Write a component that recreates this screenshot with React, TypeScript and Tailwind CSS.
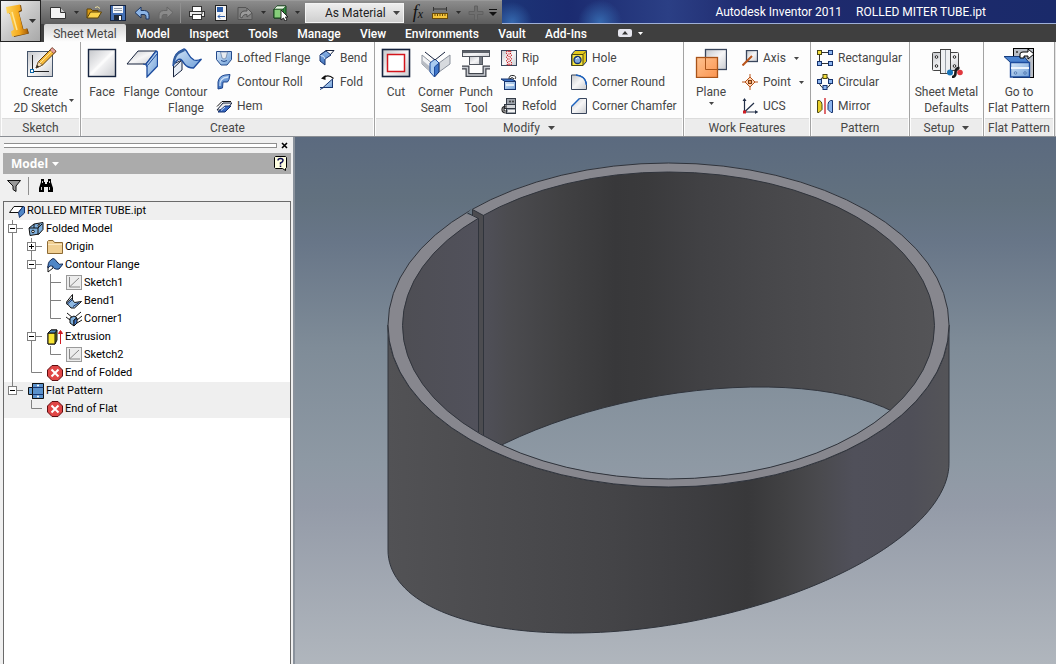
import { useState } from "react";
import type { ReactNode } from "react";
import clsx from "clsx";

type IconProps = { children: ReactNode; size?: number; className?: string };

const Icon = ({ children, size = 16, className }: IconProps) => (
  <svg
    width={size}
    height={size}
    viewBox={`0 0 ${size} ${size}`}
    className={clsx("shrink-0", className)}
    aria-hidden="true"
  >
    {children}
  </svg>
);

const Caret = ({ className }: { className?: string }) => (
  <svg width="7" height="4" viewBox="0 0 7 4" className={clsx("shrink-0", className)} aria-hidden="true">
    <path d="M0 0h7L3.5 4z" fill="currentColor" />
  </svg>
);

const SmallCaret = ({ className }: { className?: string }) => (
  <svg width="5" height="3" viewBox="0 0 5 3" className={clsx("shrink-0", className)} aria-hidden="true">
    <path d="M0 0h5L2.5 3z" fill="currentColor" />
  </svg>
);

/* shared gradients for the ribbon icons */
const Defs = () => (
  <svg width="0" height="0" className="absolute" aria-hidden="true">
    <defs>
      <linearGradient id="steel" x1="0" y1="0" x2="1" y2="1">
        <stop offset="0" stopColor="#c4c6ca" />
        <stop offset=".5" stopColor="#f6f6f7" />
        <stop offset="1" stopColor="#c9cbcf" />
      </linearGradient>
      <linearGradient id="blue" x1="0" y1="0" x2="1" y2="1">
        <stop offset="0" stopColor="#d6e7f8" />
        <stop offset="1" stopColor="#6f9fd8" />
      </linearGradient>
      <linearGradient id="blueDeep" x1="0" y1="0" x2="0" y2="1">
        <stop offset="0" stopColor="#8db6e6" />
        <stop offset="1" stopColor="#3e70bd" />
      </linearGradient>
      <linearGradient id="gold" x1="0" y1="0" x2="1" y2="0">
        <stop offset="0" stopColor="#ffd75c" />
        <stop offset=".6" stopColor="#f5a91c" />
        <stop offset="1" stopColor="#a85f08" />
      </linearGradient>
      <linearGradient id="orange" x1="0" y1="0" x2="1" y2="1">
        <stop offset="0" stopColor="#ffc28f" />
        <stop offset="1" stopColor="#fb9450" />
      </linearGradient>
    </defs>
  </svg>
);

/* ---------- large icons ---------- */

const Sketch2DIcon = () => (
  <Icon size={32}>
    <rect x="2.500" y="5.500" width="25" height="25" fill="url(#steel)" stroke="#44546a" />
    <path d="M7.500 9v17M7 25.500h17" stroke="#222" fill="none" />
    <rect x="5.500" y="23.500" width="3" height="3" fill="#fff" stroke="#0b66a8" />
    <path d="M11 22l2.500-6.500L27 2l4 3.500L17.500 19z" fill="#f5b93b" stroke="#5b3b10" />
    <path d="M11 22l2.500-6.500 4 3.500z" fill="#f9e2b8" stroke="#5b3b10" strokeWidth=".6" />
    <path d="M11 22l1.200-3 2 1.700z" fill="#222" />
    <path d="M25 4l2-2.500 4 3.500-2.200 2.500z" fill="#e9a2a0" stroke="#6b3a20" strokeWidth=".7" />
    <path d="M15 17L26.500 5.500" stroke="#ffe79a" />
  </Icon>
);

const FaceIcon = () => (
  <Icon size={32}>
    <rect x="2.500" y="3.500" width="27" height="27" fill="url(#steel)" stroke="#16243f" strokeWidth="1.400" />
    <path d="M5 28L27 6" stroke="#fff" strokeWidth="3" opacity=".6" />
  </Icon>
);

const FlangeIcon = () => (
  <Icon size={32}>
    <path d="M1 18L12 5h18L20 18z" fill="url(#steel)" stroke="#17233d" />
    <path d="M20 18L30 5q2 .5 1.500 3v12L21 31V20q0-1.500-1-2z" fill="url(#blue)" stroke="#1d4c9e" strokeWidth="1.300" />
    <path d="M21.500 19.500L31 8" stroke="#1d4c9e" fill="none" />
    <path d="M17 18q3.500 0 4 3" stroke="#1d4c9e" fill="none" />
  </Icon>
);

const ContourFlangeIcon = () => (
  <Icon size={32}>
    <path d="M3.500 31V18L12 14v10z" fill="#e8eef6" stroke="#17233d" />
    <path d="M12 14L3.500 22" stroke="#17233d" />
    <path d="M3 20Q3 10 9 5.500L14 3q2 .5 4 4.500t6 6.500q3.500 1 7.500-1l-8 9q-6 0-9-4l-2.500-3.500q-2-2.500-5 0T3 20z" fill="url(#blue)" stroke="#1d4c9e" strokeWidth="1.300" />
    <path d="M4 18q0-7 4.500-11l6-3" stroke="#35609f" strokeWidth="2" fill="none" />
  </Icon>
);

const CutIcon = () => (
  <Icon size={32}>
    <rect x="2.500" y="3.500" width="27" height="27" fill="url(#steel)" stroke="#16243f" strokeWidth="1.600" />
    <rect x="7.500" y="8.500" width="17" height="17" fill="#fff" stroke="#d3151c" strokeWidth="1.500" />
  </Icon>
);

const CornerSeamIcon = () => (
  <Icon size={32}>
    <path d="M2 9l11 9v10L2 18z" fill="#f1f2f4" stroke="#8a919c" />
    <path d="M2 14l11 9v5L2 18z" fill="#b8bcc3" />
    <path d="M30 9l-11 8v9l11-8z" fill="#d7dade" stroke="#8a919c" />
    <path d="M19 17v9l-4.500 5V20z" fill="#3f76c9" stroke="#12306e" />
    <path d="M10 17l5-4 4 4-4.500 4v10L10 26z" fill="#a9cbf0" stroke="#1d4c9e" />
    <path d="M5 6l10 8L25 6" stroke="#17233d" fill="none" />
  </Icon>
);

const PunchIcon = () => (
  <Icon size={32}>
    <rect x="2.500" y="4.500" width="27" height="6" fill="url(#steel)" stroke="#50555d" />
    <rect x="3" y="5" width="26" height="2" fill="#5c6168" />
    <rect x="9.500" y="10.500" width="13" height="8" fill="url(#steel)" stroke="#50555d" />
    <path d="M19 11h3v7h-3z" fill="#777c84" />
    <path d="M2 21.500h5.500V29h17v-7.500H30" fill="none" stroke="#40454d" strokeWidth="4" />
    <path d="M2 21.500h5.500V29h17v-7.500H30" fill="none" stroke="#c9ccd1" strokeWidth="1.500" />
  </Icon>
);

const PlaneIcon = () => (
  <Icon size={32}>
    <rect x="10.500" y="3.500" width="21" height="20" fill="url(#steel)" stroke="#39465c" strokeWidth="1.300" />
    <rect x="1.500" y="11.500" width="21" height="20" fill="url(#orange)" stroke="#a85319" strokeWidth="1.300" />
    <path d="M10.500 12v11.500H22" fill="none" stroke="#a85319" />
  </Icon>
);

const DefaultsIcon = () => (
  <Icon size={32}>
    <rect x="1.500" y="6.500" width="26" height="18" rx="1" fill="url(#steel)" stroke="#444" />
    <rect x="9.500" y="3.500" width="10" height="24" fill="#eef0f2" stroke="#444" />
    <path d="M14.500 4v23" stroke="#9aa0a8" />
    <g fill="#fff" stroke="#222">
      <circle cx="5.500" cy="11" r="1.300" />
      <circle cx="5.500" cy="20" r="1.300" />
      <circle cx="23.500" cy="11" r="1.300" />
      <circle cx="23.500" cy="20" r="1.300" />
    </g>
    <circle cx="19" cy="26.500" r="3" fill="#1674b8" />
    <circle cx="29" cy="26.500" r="2.800" fill="#e0383e" />
    <path d="M21 31q3.500 0 3.500-4.500T28.500 22" fill="none" stroke="#1a1a1a" strokeWidth="2.600" />
  </Icon>
);

const GoToFlatIcon = () => (
  <Icon size={32}>
    <rect x="10.500" y="2.500" width="20" height="29" fill="#b9bec6" stroke="#000" />
    <circle cx="14" cy="6" r="1" fill="#333" />
    <path d="M1 10.500h20l5 6H7.500z" fill="#4a82cf" stroke="#163d7e" />
    <path d="M7.500 16.500h19V31h-19z" fill="url(#blue)" stroke="#1d4c9e" strokeWidth="1.400" />
    <path d="M8 22h18" stroke="#eef5fd" strokeWidth="2" />
    <circle cx="12.500" cy="27" r="1.300" fill="none" stroke="#5a7fb4" />
    <circle cx="22" cy="27" r="1.300" fill="none" stroke="#5a7fb4" />
    <path d="M17 12V8q0-2 3-2h5V3l6 5-6 5v-3h-4v2z" fill="#fff" stroke="#000" />
  </Icon>
);

/* ---------- small icons ---------- */

const LoftedIcon = () => (
  <Icon>
    <path d="M.5 1.500h15v8L11 15H5L.5 9.500z" fill="url(#blue)" stroke="#234a8c" />
    <path d="M4.500 2l1.500 6q2 2 4 0l1.500-6z" fill="#e7ebf0" stroke="#6f86a8" strokeWidth=".8" />
    <path d="M5 10.500q3 2 6 0" stroke="#234a8c" fill="none" />
  </Icon>
);
const ContourRollIcon = () => (
  <Icon>
    <path d="M2 15V8q1-6 7-7l5-.5-1 5-1.500 2.500H7L6.500 14z" fill="url(#blueDeep)" stroke="#1c448d" />
    <path d="M4 12q-1-8 8-9" stroke="#cfe2f7" fill="none" strokeWidth="1.300" />
  </Icon>
);
const HemIcon = () => (
  <Icon>
    <path d="M1 8.500L6 3.500h9" fill="none" stroke="#111" />
    <path d="M1 12L7 5h9l-6 7z" fill="url(#steel)" stroke="#17233d" />
    <path d="M2 14l7-6h6l-6 6z" fill="#3869c4" stroke="#12306e" />
    <path d="M5 12.500l4-3.500" stroke="#cfe2f7" />
  </Icon>
);
const BendIcon = () => (
  <Icon>
    <path d="M1 5l6-4.500h8L10 6z" fill="#fff" stroke="#17233d" />
    <path d="M1 5l6-4 5 4-6 4v6L1 11z" fill="url(#blueDeep)" stroke="#17346f" />
    <path d="M1.500 5.500q4 0 4.500 3.500" stroke="#dcebfa" fill="none" />
  </Icon>
);
const FoldIcon = () => (
  <Icon>
    <path d="M1 13.500h13M1 15.500l11-6" stroke="#17346f" fill="none" />
    <path d="M4 13.500L13.500 5v8.500z" fill="url(#blue)" stroke="#17346f" />
    <path d="M4 4q5-4.500 10.500.5" stroke="#111" strokeWidth="1.300" fill="none" />
    <path d="M2 4.500L6.500 1v5z" fill="#111" />
  </Icon>
);
const RipIcon = () => (
  <Icon>
    <rect x=".5" y=".5" width="15" height="15" fill="url(#steel)" stroke="#39465c" />
    <path d="M6 1l-1 2 2 2-2 2 2 2-2 2 2 2-1 2h4l1-2-2-2 2-2-2-2 2-2-2-2 1-2z" fill="#f6dfe0" stroke="#c4161c" strokeDasharray="1.500 1" />
    <path d="M8 1v14" stroke="#c4161c" strokeDasharray="1 1.500" />
  </Icon>
);
const UnfoldIcon = () => (
  <Icon>
    <path d="M0 5h11l4 2.500H4z" fill="#3d73c6" stroke="#17346f" />
    <rect x="3.500" y="7.500" width="11" height="8" fill="url(#blue)" stroke="#17346f" />
    <path d="M5 11h8" stroke="#fff" strokeWidth="1.500" />
    <path d="M8 5q0-4 4-3.500T14 5M9 5q2-3 4 0" stroke="#222" fill="none" />
  </Icon>
);
const RefoldIcon = () => (
  <Icon>
    <rect x="5.500" y=".5" width="9" height="15" fill="#9da3ab" stroke="#333b46" />
    <rect x="3.500" y="6.500" width="11" height="4" fill="#d5d8dc" stroke="#333b46" />
    <circle cx="9" cy="3.500" r=".9" fill="#333" />
    <circle cx="12" cy="3.500" r=".9" fill="#333" />
    <path d="M6 8Q1 8 1 11.500T5 15M6 10H3v3h3" stroke="#222" fill="none" strokeWidth="1.200" />
    <path d="M7 13h7" stroke="#f4f4f4" strokeWidth="2" />
  </Icon>
);
const HoleIcon = () => (
  <Icon>
    <path d="M.5 4.500L4 .5h11.500v11L12 15.500H.5z" fill="#e2c81e" stroke="#17346f" />
    <path d="M1 4.500h11v11H1z" fill="#f7e53f" stroke="#4f4a10" />
    <path d="M12 4.500L15.500 1" stroke="#4f4a10" />
    <circle cx="6.500" cy="10" r="3.500" fill="#7fa8dc" stroke="#12306e" strokeWidth="1.300" />
    <path d="M5 9q1.500-2 3-1" stroke="#fff" fill="none" />
  </Icon>
);
const RoundIcon = () => (
  <Icon>
    <path d="M.5 1h5Q15 2 15.500 11v4.500H.5z" fill="url(#steel)" stroke="#39465c" />
    <path d="M5 1q10 1 10.500 10" fill="none" stroke="#1b62c0" strokeWidth="1.500" />
  </Icon>
);
const ChamferIcon = () => (
  <Icon>
    <path d="M.5 8.500l8-8h7v15H.5z" fill="url(#steel)" stroke="#39465c" />
    <path d="M.5 8.500l8-8" stroke="#1b62c0" strokeWidth="1.500" />
  </Icon>
);
const AxisIcon = () => (
  <Icon>
    <rect x="4.500" y=".5" width="11" height="11" fill="url(#steel)" stroke="#39465c" strokeWidth="1.300" />
    <path d="M.5 15.500L10 6" stroke="#b9541b" strokeWidth="2" />
  </Icon>
);
const PointIcon = () => (
  <Icon>
    <path d="M8 0v16M0 8h16" stroke="#b9541b" />
    <path d="M8 3l5 5-5 5-5-5z" fill="#fcd3b2" stroke="#b9541b" />
    <rect x="6.500" y="6.500" width="3" height="3" fill="#f39a5a" stroke="#7c3a10" />
  </Icon>
);
const UcsIcon = () => (
  <Icon>
    <path d="M2.500 1v13h13M2.500 14L12 5" fill="none" stroke="#222f48" strokeWidth="1.200" />
    <path d="M.5 3l2-3 2 3zM13 12l3 2-3 2z" fill="#222f48" />
    <rect x="1" y="12.500" width="3" height="3" fill="#cf1b22" />
  </Icon>
);
const RectPatternIcon = () => (
  <Icon>
    <path d="M2.500 2.500h11M2.500 2.500v11h11" stroke="#333" fill="none" />
    <rect x=".5" y=".5" width="4" height="4" fill="#f4df3d" stroke="#4b4713" />
    <g fill="#8db6f0" stroke="#17346f">
      <rect x="11.500" y=".5" width="4" height="4" />
      <rect x=".5" y="11.500" width="4" height="4" />
      <rect x="11.500" y="11.500" width="4" height="4" />
    </g>
  </Icon>
);
const CircPatternIcon = () => (
  <Icon>
    <circle cx="8" cy="8.500" r="5.500" stroke="#222" fill="none" />
    <rect x="6" y=".5" width="4" height="4" fill="#f4df3d" stroke="#4b4713" />
    <g fill="#8db6f0" stroke="#17346f">
      <rect x=".5" y="5.500" width="4" height="4" />
      <rect x="11.500" y="5.500" width="4" height="4" />
      <rect x="6" y="11.500" width="4" height="4" />
    </g>
  </Icon>
);
const MirrorIcon = () => (
  <Icon>
    <path d="M.5 2.500h2q2.500 1 2.500 4v5L2 14.500H.5z" fill="#e8cf2a" stroke="#4b4713" />
    <path d="M15.500 2.500h-2q-2.500 1-2.500 4v5l3 3h1.500z" fill="#8db6f0" stroke="#17346f" />
    <path d="M8 0v16" stroke="#cf1b22" strokeWidth="1.300" />
  </Icon>
);

/* ---------- quick access icons ---------- */

const NewIcon = () => (
  <Icon>
    <path d="M.5 2.500h10l5 5v6H.5z" fill="#f4f4f4" stroke="#333" />
    <path d="M10.500 2.500v5h5" fill="#c8c8c8" stroke="#333" />
  </Icon>
);
const OpenIcon = () => (
  <Icon>
    <path d="M1 13V4h4l1.500 1.500H12V8" fill="#d99a14" stroke="#5d4208" />
    <path d="M1 13l3.500-6H15.500L12 13z" fill="#fbd24c" stroke="#5d4208" />
    <path d="M9 2.500q3-2 5 1" fill="none" stroke="#efe3a0" />
  </Icon>
);
const SaveIcon = () => (
  <Icon>
    <rect x=".5" y=".5" width="15" height="15" fill="#4470b5" stroke="#16243f" />
    <rect x="3" y="1" width="10" height="7" fill="#f3f5f8" />
    <path d="M4 3.500h8M4 5.500h8" stroke="#8d98a8" />
    <rect x="4" y="10" width="8" height="5" fill="#1f2937" />
    <rect x="9" y="11" width="2" height="4" fill="#fff" />
  </Icon>
);
const UndoIcon = ({ dim }: { dim?: boolean }) => (
  <Icon className={dim ? "-scale-x-100" : ""}>
    <path
      d="M1 7.500l6-5.500v3.500h3.500q4.500.5 4.500 5V14h-3v-2.500q0-2-2-2H7V13z"
      fill={dim ? "#8a8a8a" : "#8bb4e6"}
      stroke={dim ? "#666" : "#1c3560"}
    />
  </Icon>
);
const PrintIcon = () => (
  <Icon>
    <rect x="3.500" y="1.500" width="9" height="5" fill="#fff" stroke="#333" />
    <rect x=".5" y="6.500" width="15" height="5" fill="#e9e9e9" stroke="#333" />
    <rect x="3.500" y="9.500" width="9" height="5" fill="#fff" stroke="#333" />
    <path d="M12 8h2" stroke="#333" />
  </Icon>
);
const PropsIcon = () => (
  <Icon>
    <rect x="2.500" y=".5" width="11" height="15" fill="#f4f4f4" stroke="#222" />
    <rect x="4" y="2" width="6" height="5" fill="#2c5da9" />
    <path d="M5 11.500h7M5 11.500l2-2M5 11.500l2 2" stroke="#2c5da9" fill="none" />
  </Icon>
);
const UpdateIcon = () => (
  <Icon>
    <path d="M1 2.500h8l6 6v6H1z" fill="#808080" stroke="#555" />
    <path d="M3 12q0-7 7-6V3l5 5-5 4V9.500Q6 9 5 13z" fill="#9b9b9b" stroke="#555" />
  </Icon>
);
const SelectIcon = () => (
  <Icon>
    <path d="M1 4l3-3h9v9l-3 3H1z" fill="#2f8f3e" stroke="#14401b" />
    <path d="M1 4h9v9H1z" fill="#86cf7a" stroke="#14401b" />
    <path d="M4 1h9l-3 3H1z" fill="#eafbe5" stroke="#14401b" strokeWidth=".6" />
    <path d="M8 5v10l2.500-2 1.500 3 2-1-1.500-3H15z" fill="#fff" stroke="#222" />
  </Icon>
);
const MeasureIcon = () => (
  <Icon>
    <path d="M1.500 2v4M14.500 2v4M2 4h12" stroke="#333" />
    <rect x=".5" y="8.500" width="15" height="5" fill="#f6c53a" stroke="#6b4b08" />
    <path d="M3 9v2M5.500 9v2M8 9v2M10.500 9v2M13 9v2" stroke="#6b4b08" />
  </Icon>
);
const PlusIcon = () => (
  <Icon>
    <path d="M6.500 1h3v5.500H15v3H9.500V15h-3V9.500H1v-3h5.500z" fill="#6f6f6f" stroke="#606060" />
  </Icon>
);
const LogoIcon = () => (
  <svg width="26" height="34" viewBox="0 0 26 34" aria-hidden="true">
    <path d="M3 4l13-3 1 6-3 1.500 4.500 17 4-1 1.500 5L9 33l-1-5 3.500-2L7 9.500 4.500 10z" fill="#6f4208" />
    <path d="M1 3l14-2.500 1 5.500-2.500 1.500 4.500 18 4-1 1 5L7 32.500l-1-5 3-2L4.500 9 2 9.500z" fill="url(#gold)" />
    <path d="M7 8l5 18" stroke="#ffe590" strokeWidth="1.500" />
  </svg>
);

/* ---------- browser tree icons ---------- */

const PartIcon = () => (
  <Icon>
    <path d="M.5 9.500L5 3.500h9L9.500 9.500z" fill="#fff" stroke="#111" />
    <path d="M9.500 9.500L14 3.500l1.500.5v6L10.500 14.500z" fill="#4f86c6" stroke="#12306e" />
  </Icon>
);
const FoldedIcon = () => (
  <Icon>
    <path d="M1 7l5-4 9-1.500v7L11 13l-9 1.500z" fill="#7fb0dd" stroke="#111" />
    <path d="M1 7h9v7M10 7l4-4M6 3v4" stroke="#111" fill="none" />
    <circle cx="5" cy="10.500" r="1.300" fill="#fff" stroke="#111" />
    <circle cx="11" cy="4.500" r="1" fill="#fff" stroke="#111" />
  </Icon>
);
const FolderIcon = () => (
  <Icon>
    <path d="M.5 14.500v-12l1-1H6l1.500 2h8v11z" fill="#f0cf93" stroke="#8d6a34" />
    <path d="M1 5.500h14" stroke="#fbe7c0" />
  </Icon>
);
const TreeContourIcon = () => (
  <Icon>
    <path d="M1 15V9l5-3v5z" fill="#fff" stroke="#111" />
    <path d="M1 9q0-5 5-7.500 2 0 4 3.500t6 2l-4 5q-5 1-6.500-3Q3 8 1 11z" fill="#4f86c6" stroke="#0e2550" />
  </Icon>
);
const TreeSketchIcon = () => (
  <Icon>
    <rect x=".5" y=".5" width="15" height="14" fill="#ececec" stroke="#9a9a9a" />
    <path d="M3.500 2v10H14M4 11.500L13 3" fill="none" stroke="#888" />
  </Icon>
);
const TreeBendIcon = () => (
  <Icon>
    <path d="M.5 9l6-7.500V6l-5 6z" fill="#fff" stroke="#111" />
    <path d="M.5 10l5-4.500 3 4 7-1-7 6.500H5z" fill="#8fb9e2" stroke="#111" />
    <path d="M2 10.500l4-3.500M7 13.500l6-4" stroke="#12306e" />
  </Icon>
);
const TreeCornerIcon = () => (
  <Icon>
    <path d="M1 2l6 5M0 6l4 3M15 1L9 6M16 5l-5 4M16 9l-5 3" stroke="#111" />
    <path d="M4 7l4-2 3 2-3 2v6l-4-3z" fill="#7fb0dd" stroke="#111" />
    <path d="M8 9l3-2v5l-3 3z" fill="#3f76c9" stroke="#111" />
  </Icon>
);
const TreeExtrudeIcon = () => (
  <Icon>
    <path d="M1 4l3-3h6v10l-2 4H1z" fill="#6f7f1b" stroke="#111" />
    <path d="M1 4h7v11H1z" fill="#f8e532" stroke="#111" />
    <path d="M1 4l3-3h6L8 4z" fill="#4d86b8" stroke="#111" />
    <path d="M13.500 15V2M11.500 4.500l2-3 2 3z" stroke="#cf1b22" fill="#cf1b22" />
  </Icon>
);
const EndIcon = () => (
  <Icon>
    <path d="M5 .5h6L15.500 5v6L11 15.500H5L.5 11V5z" fill="#e04646" stroke="#5e0d10" />
    <path d="M4.500 4.500l7 7M11.500 4.500l-7 7" stroke="#fff" strokeWidth="2" />
  </Icon>
);
const FlatIcon = () => (
  <Icon>
    <path d="M.5 4.500h4v-4h7v15h-7v-4h-4z" fill="#67a0d6" stroke="#111" />
    <path d="M4.500.5h11v15h-11z" fill="#5a92cd" stroke="#111" />
    <path d="M4.500 4.500h11M4.500 11.500h11" stroke="#17346f" />
    <circle cx="10" cy="2.500" r="1" fill="#fff" />
    <circle cx="10" cy="13.500" r="1" fill="#fff" />
  </Icon>
);

/* ---------- ribbon ---------- */

type LargeProps = { icon: ReactNode; lines: string[]; width: string; arrow?: "side" | "below" };

const LargeButton = ({ icon, lines, width, arrow }: LargeProps) => (
  <button type="button" className={clsx("relative flex shrink-0 flex-col items-center whitespace-nowrap", width)}>
    <span className="flex h-9 items-start">{icon}</span>
    <span className="mt-0.5 block leading-4">
      {lines.map((line) => (
        <span key={line} className="block text-center">
          {line}
        </span>
      ))}
    </span>
    {arrow === "side" && <SmallCaret className="absolute right-1.5 bottom-4" />}
    {arrow === "below" && <SmallCaret className="mt-0.5" />}
  </button>
);

type SmallItem = { icon: ReactNode; label: string; arrow?: boolean };

const SmallColumn = ({ items, width }: { items: SmallItem[]; width?: string }) => (
  <div className={clsx("flex shrink-0 flex-col", width)}>
    {items.map(({ icon, label, arrow }) => (
      <button key={label} type="button" className="flex h-6 items-center whitespace-nowrap">
        {icon}
        <span className="ml-[5px]">{label}</span>
        {arrow && <SmallCaret className="ml-2" />}
      </button>
    ))}
  </div>
);

type PanelProps = { title: string; width: string; menu?: boolean; children: ReactNode };

const Panel = ({ title, width, menu, children }: PanelProps) => (
  <section
    aria-label={title}
    className={clsx("flex shrink-0 flex-col border-r border-[#a3a3a3] bg-[#fdfdfd]", width)}
  >
    <div className="flex h-[76px] pt-1">{children}</div>
    <h2 className="mx-px flex h-[18px] items-center justify-center gap-2 border-t border-[#dcdcdc] bg-[#ececec] whitespace-nowrap">
      {title}
      {menu && <Caret />}
    </h2>
  </section>
);

const createCol1: SmallItem[] = [
  { icon: <LoftedIcon />, label: "Lofted Flange" },
  { icon: <ContourRollIcon />, label: "Contour Roll" },
  { icon: <HemIcon />, label: "Hem" },
];
const createCol2: SmallItem[] = [
  { icon: <BendIcon />, label: "Bend" },
  { icon: <FoldIcon />, label: "Fold" },
];
const modifyCol1: SmallItem[] = [
  { icon: <RipIcon />, label: "Rip" },
  { icon: <UnfoldIcon />, label: "Unfold" },
  { icon: <RefoldIcon />, label: "Refold" },
];
const modifyCol2: SmallItem[] = [
  { icon: <HoleIcon />, label: "Hole" },
  { icon: <RoundIcon />, label: "Corner Round" },
  { icon: <ChamferIcon />, label: "Corner Chamfer" },
];
const workCol: SmallItem[] = [
  { icon: <AxisIcon />, label: "Axis", arrow: true },
  { icon: <PointIcon />, label: "Point", arrow: true },
  { icon: <UcsIcon />, label: "UCS" },
];
const patternCol: SmallItem[] = [
  { icon: <RectPatternIcon />, label: "Rectangular" },
  { icon: <CircPatternIcon />, label: "Circular" },
  { icon: <MirrorIcon />, label: "Mirror" },
];

const Ribbon = () => (
  <div className="flex overflow-hidden border-b border-[#8a8e94] bg-[#e4e4e4] pl-px text-[12px] text-[#464646]">
    <Panel title="Sketch" width="w-20">
      <LargeButton icon={<Sketch2DIcon />} lines={["Create", "2D Sketch"]} width="w-full" arrow="side" />
    </Panel>
    <Panel title="Create" width="w-[294px]">
      <LargeButton icon={<FaceIcon />} lines={["Face"]} width="w-[42px]" />
      <LargeButton icon={<FlangeIcon />} lines={["Flange"]} width="w-[37px]" />
      <LargeButton icon={<ContourFlangeIcon />} lines={["Contour", "Flange"]} width="w-[52px]" />
      <div className="flex pl-1">
        <SmallColumn items={createCol1} width="w-[103px]" />
        <SmallColumn items={createCol2} />
      </div>
    </Panel>
    <Panel title="Modify" width="w-[309px]" menu>
      <LargeButton icon={<CutIcon />} lines={["Cut"]} width="w-[42px]" />
      <LargeButton icon={<CornerSeamIcon />} lines={["Corner", "Seam"]} width="w-[38px]" />
      <LargeButton icon={<PunchIcon />} lines={["Punch", "Tool"]} width="w-[42px]" />
      <div className="flex pl-1">
        <SmallColumn items={modifyCol1} width="w-[70px]" />
        <SmallColumn items={modifyCol2} />
      </div>
    </Panel>
    <Panel title="Work Features" width="w-[127px]">
      <LargeButton icon={<PlaneIcon />} lines={["Plane"]} width="w-[54px]" arrow="below" />
      <div className="flex pl-1">
        <SmallColumn items={workCol} />
      </div>
    </Panel>
    <Panel title="Pattern" width="w-[99px]">
      <div className="flex pl-1.5">
        <SmallColumn items={patternCol} />
      </div>
    </Panel>
    <Panel title="Setup" width="w-[74px]" menu>
      <LargeButton icon={<DefaultsIcon />} lines={["Sheet Metal", "Defaults"]} width="w-full" />
    </Panel>
    <Panel title="Flat Pattern" width="w-[71px]">
      <LargeButton icon={<GoToFlatIcon />} lines={["Go to", "Flat Pattern"]} width="w-full" />
    </Panel>
  </div>
);

/* ---------- header ---------- */

const QatButton = ({ label, width, children }: { label: string; width: string; children: ReactNode }) => (
  <button type="button" aria-label={label} className={clsx("flex h-full shrink-0 items-center justify-center", width)}>
    {children}
  </button>
);

const QuickAccess = () => (
  <div className="flex h-6 shrink-0 items-center border-t border-[#9a9a9a] bg-linear-to-b from-[#8c8c8c] to-[#5d5d5d] pl-[9px] text-[#2d2d2d]">
    <QatButton label="New" width="w-4"><NewIcon /></QatButton>
    <QatButton label="New options" width="w-5"><SmallCaret /></QatButton>
    <QatButton label="Open" width="w-4"><OpenIcon /></QatButton>
    <QatButton label="Save" width="w-8"><SaveIcon /></QatButton>
    <QatButton label="Undo" width="w-4"><UndoIcon /></QatButton>
    <QatButton label="Redo" width="w-[31px]"><UndoIcon dim /></QatButton>
    <span className="mr-2 -ml-px h-5 w-px bg-[#8f8f8f]" />
    <QatButton label="Print" width="w-4"><PrintIcon /></QatButton>
    <QatButton label="Properties" width="w-8"><PropsIcon /></QatButton>
    <QatButton label="Update" width="w-4"><UpdateIcon /></QatButton>
    <QatButton label="Update options" width="w-5"><SmallCaret /></QatButton>
    <QatButton label="Select" width="w-4"><SelectIcon /></QatButton>
    <QatButton label="Select options" width="w-4"><SmallCaret /></QatButton>
    <div className="relative flex items-center text-[#222]">
      <select
        aria-label="Color override"
        className="h-5 w-[99px] appearance-none border border-[#f3f3f3] bg-linear-to-b from-[#ededed] to-[#cfcfcf] pl-[19px] text-[12px] leading-4"
      >
        <option>As Material</option>
      </select>
      <Caret className="pointer-events-none absolute right-1 text-[#444]" />
    </div>
    <QatButton label="Parameters" width="w-7">
      <span className="font-['Liberation_Serif',serif] text-[18px] leading-4 italic text-[#111]">
        f<span className="text-[12px]">x</span>
      </span>
    </QatButton>
    <QatButton label="Measure" width="w-4"><MeasureIcon /></QatButton>
    <QatButton label="Measure options" width="w-5"><SmallCaret /></QatButton>
    <QatButton label="Add" width="w-4"><PlusIcon /></QatButton>
    <QatButton label="Customize toolbar" width="w-[18px]">
      <svg width="8" height="7" viewBox="0 0 8 7" aria-hidden="true">
        <path d="M0 0h8v1H0zM0 3h8L4 7z" fill="#111" />
      </svg>
    </QatButton>
  </div>
);

const tabs = [
  { label: "Sheet Metal", width: "w-[82px]" },
  { label: "Model", width: "w-[54px]" },
  { label: "Inspect", width: "w-[58px]" },
  { label: "Tools", width: "w-[50px]" },
  { label: "Manage", width: "w-[62px]" },
  { label: "View", width: "w-[46px]" },
  { label: "Environments", width: "w-[92px]" },
  { label: "Vault", width: "w-12" },
  { label: "Add-Ins", width: "w-[60px]" },
];

const Header = () => {
  const [active, setActive] = useState("Sheet Metal");

  return (
    <header className="flex bg-[#3f3f3f]">
      <button
        type="button"
        aria-label="Application menu"
        className="flex h-[42px] w-[41px] shrink-0 items-center border border-[#222] bg-linear-to-br from-[#f4f4f4] via-[#c9c9c9] to-[#a8a8a8] pl-1 text-[#333]"
      >
        <LogoIcon />
        <Caret className="-ml-0.5" />
      </button>
      <div className="flex min-w-0 grow flex-col">
        <div className="flex h-6">
          <QuickAccess />
          <div className="flex grow items-center justify-end border-b border-[#9fb0d8] bg-[#1b2a6c] bg-[radial-gradient(circle_at_10px_22px,#3568ae_0,transparent_20px),radial-gradient(circle_at_98px_22px,#3568ae_0,transparent_22px),linear-gradient(90deg,#1c3577,#1b2b70_12%,#2b3f85_30%,#1f2a6e_45%,#1a2a6a)] pr-[70px] text-[12px] text-white">
            <h1>Autodesk Inventor 2011</h1>
            <span className="ml-3.5">ROLLED MITER TUBE.ipt</span>
          </div>
        </div>
        <nav className="flex h-[18px] items-stretch pl-[3px] text-[12px] text-white">
          {tabs.map(({ label, width }) => (
            <button
              key={label}
              type="button"
              onClick={() => setActive(label)}
              className={clsx(
                "flex shrink-0 items-center justify-center pt-0.5 whitespace-nowrap",
                width,
                active === label
                  ? "rounded-t-xs bg-linear-to-b from-[#d4d4d4] to-[#fdfdfd] text-[#464646]"
                  : "font-medium"
              )}
            >
              {label}
            </button>
          ))}
          <button type="button" aria-label="Minimize ribbon" className="ml-[22px] flex items-center gap-1.5">
            <svg width="14" height="8" viewBox="0 0 14 8" aria-hidden="true">
              <rect width="14" height="8" rx="2" fill="#e6e6ee" />
              <path d="M4 5.500L7 2l3 3.500z" fill="#333" />
            </svg>
            <SmallCaret />
          </button>
        </nav>
      </div>
    </header>
  );
};

/* ---------- model browser ---------- */

// guides: "v" line passes through, "t" tee, "l" last child, " " empty
type Node = { label: string; icon: ReactNode; guides: string; toggle?: "+" | "-"; shaded?: boolean };

const nodes: Node[] = [
  { label: "ROLLED MITER TUBE.ipt", icon: <PartIcon />, guides: "", shaded: true },
  { label: "Folded Model", icon: <FoldedIcon />, guides: "t", toggle: "-" },
  { label: "Origin", icon: <FolderIcon />, guides: "vt", toggle: "+" },
  { label: "Contour Flange", icon: <TreeContourIcon />, guides: "vt", toggle: "-" },
  { label: "Sketch1", icon: <TreeSketchIcon />, guides: "vvt" },
  { label: "Bend1", icon: <TreeBendIcon />, guides: "vvt" },
  { label: "Corner1", icon: <TreeCornerIcon />, guides: "vvl" },
  { label: "Extrusion", icon: <TreeExtrudeIcon />, guides: "vt", toggle: "-" },
  { label: "Sketch2", icon: <TreeSketchIcon />, guides: "vvl" },
  { label: "End of Folded", icon: <EndIcon />, guides: "vl" },
  { label: "Flat Pattern", icon: <FlatIcon />, guides: "l", toggle: "-", shaded: true },
  { label: "End of Flat", icon: <EndIcon />, guides: " l", shaded: true },
];

const guidePaths: Record<string, string> = {
  v: "M8.500 0V18",
  t: "M8.500 0V18M8.500 8.500H20",
  l: "M8.500 0V8.500H20",
  " ": "",
};

const Guide = ({ kind, toggle }: { kind: string; toggle?: "+" | "-" }) => (
  <svg width="19" height="18" viewBox="0 0 19 18" className="shrink-0" aria-hidden="true">
    <path d={guidePaths[kind]} fill="none" stroke="#808080" />
    {toggle && (
      <>
        <rect x="4.500" y="4.500" width="8" height="8" fill="#fff" stroke="#808080" />
        <path d={toggle === "+" ? "M6 8.500h5M8.500 6v5" : "M6 8.500h5"} stroke="#000" />
      </>
    )}
  </svg>
);

const TreeRow = ({ node }: { node: Node }) => {
  const cells = node.guides.split("");
  return (
    <li className={clsx("flex h-[18px] items-center whitespace-nowrap", node.shaded && "bg-[#efefef]")}>
      {cells.map((kind, i) => (
        <Guide key={i} kind={kind} toggle={i === cells.length - 1 ? node.toggle : undefined} />
      ))}
      <span className="ml-[5px]">{node.icon}</span>
      <span className="ml-0.5">{node.label}</span>
    </li>
  );
};

const Browser = () => (
  <aside className="flex w-[295px] shrink-0 flex-col border-r-2 border-[#8a929c] bg-[#f0f0f0] pr-0.5 pl-[3px] text-[11px] text-black">
    <div className="flex h-4 items-center gap-1 pl-px">
      <span className="h-[5px] grow border-y border-r border-[#8f8f8f] bg-white" />
      <button type="button" aria-label="Close browser" className="mr-[3px]">
        <svg width="7" height="7" viewBox="0 0 7 7" aria-hidden="true">
          <path d="M1 1l5 5M6 1L1 6" stroke="#000" strokeWidth="1.600" />
        </svg>
      </button>
    </div>
    <div className="flex h-[21px] items-center justify-between bg-[#ababab] pr-1 pl-2">
      <button type="button" className="flex items-center font-['Open_Sans',sans-serif] text-[12px] font-bold text-white">
        Model
        <Caret className="ml-1" />
      </button>
      <button type="button" aria-label="Help">
        <svg width="13" height="15" viewBox="0 0 13 15" aria-hidden="true">
          <path d="M1.500.5h10l1 1v10l-1 1v2l-3-2h-7l-1-1v-10z" fill="#ffffe1" stroke="#000" />
          <path d="M4 4.500Q4 2.500 6.500 2.500T9 4.500Q9 6 6.500 7v1.500M6.500 9.500v1.500" stroke="#0a0a50" strokeWidth="1.500" fill="none" />
        </svg>
      </button>
    </div>
    <div className="flex h-[27px] items-center pb-1 pl-1">
      <button type="button" aria-label="Filter">
        <Icon>
          <path d="M.5 2.500h13L9 8v5.500l-3-2V8z" fill="#999" stroke="#111" />
        </Icon>
      </button>
      <span className="mx-[5px] h-[18px] w-px bg-[#8f8f8f]" />
      <button type="button" aria-label="Find" className="ml-1">
        <Icon>
          <path d="M3 1h3v3h1v2h2V4h1V1h3v3l2 6v4h-5V9H6v5H1v-4l2-6z" fill="#000" />
          <path d="M3.500 9v3M11.500 9v3M4.500 3v2M11.500 3v2" stroke="#fff" strokeWidth=".8" />
        </Icon>
      </button>
    </div>
    <ul className="grow border border-b-0 border-[#6a6a6a] bg-white">
      {nodes.map((node, i) => (
        <TreeRow key={i} node={node} />
      ))}
    </ul>
  </aside>
);

/* ---------- 3D view ---------- */

const CX = 668.5;

// The lower edge is cut on a miter, so y drops linearly with x
const ring = (rx: number, ry: number, cy: number, slope: number, from: number, to: number) => {
  const points: string[] = [];
  for (let i = 0; i <= 90; i++) {
    const a = ((from + ((to - from) * i) / 90) * Math.PI) / 180;
    const x = CX + rx * Math.cos(a);
    const y = cy + ry * Math.sin(a) + slope * (x - CX);
    points.push(`${x.toFixed(2)} ${y.toFixed(2)}`);
  }
  return points.join("L");
};

const SLOPE = -0.155;
const outerWall = `M${ring(280.5, 162, 325, 0, 180, 0)}L${ring(280.5, 118.6, 506.7, SLOPE, 0, 180)}Z`;
const innerBottom = `M${ring(266, 112.4, 506.7, SLOPE, 0, 360)}Z`;

const Viewport = () => (
  <main className="min-w-0 grow bg-[#7f8b97]">
    <svg
      className="block h-full w-full"
      viewBox="295 137 761 527"
      preserveAspectRatio="xMidYMid slice"
      role="img"
      aria-label="Rolled miter tube"
    >
      <defs>
        <linearGradient id="sky" gradientUnits="userSpaceOnUse" x1="0" y1="137" x2="0" y2="664">
          <stop offset="0" stopColor="#5b6a7f" />
          <stop offset=".12" stopColor="#62717f" />
          <stop offset=".2" stopColor="#687688" />
          <stop offset=".4" stopColor="#7f8c98" />
          <stop offset=".62" stopColor="#8e99a4" />
          <stop offset=".7" stopColor="#949ba8" />
          <stop offset="1" stopColor="#b0b6bd" />
        </linearGradient>
        <linearGradient id="inner" gradientUnits="userSpaceOnUse" x1="402" y1="0" x2="935" y2="0">
          <stop offset="0" stopColor="#4e4e54" />
          <stop offset=".14" stopColor="#51515b" />
          <stop offset=".2" stopColor="#4b4b4f" />
          <stop offset=".3" stopColor="#414143" />
          <stop offset=".4" stopColor="#38383a" />
          <stop offset=".46" stopColor="#3a3a3c" />
          <stop offset=".56" stopColor="#414144" />
          <stop offset=".72" stopColor="#49494c" />
          <stop offset="1" stopColor="#545457" />
        </linearGradient>
        <linearGradient id="outer" gradientUnits="userSpaceOnUse" x1="388" y1="0" x2="949" y2="0">
          <stop offset="0" stopColor="#525255" />
          <stop offset=".2" stopColor="#4b4b4e" />
          <stop offset=".4" stopColor="#444447" />
          <stop offset=".55" stopColor="#3d3d40" />
          <stop offset=".64" stopColor="#38383a" />
          <stop offset=".7" stopColor="#404042" />
          <stop offset=".77" stopColor="#4a4a4e" />
          <stop offset=".83" stopColor="#50505a" />
          <stop offset=".93" stopColor="#4f4f58" />
          <stop offset="1" stopColor="#545458" />
        </linearGradient>
        <clipPath id="bore">
          <ellipse cx={CX} cy="325.500" rx="266" ry="153.500" />
        </clipPath>
      </defs>
      <rect x="-1000" y="137" width="4000" height="527" fill="url(#sky)" />
      <path d={outerWall} fill="url(#outer)" stroke="#30343c" />
      <ellipse cx={CX} cy="325" rx="280.500" ry="162" fill="#87878e" stroke="#30343c" />
      <g clipPath="url(#bore)">
        <rect x="402" y="171" width="534" height="310" fill="url(#inner)" />
        <path d={innerBottom} fill="url(#sky)" stroke="#30343c" />
      </g>
      <ellipse cx={CX} cy="325.500" rx="266" ry="153.500" fill="none" stroke="#30343c" />
      {/* seam gap */}
      <path d="M466 214L472.500 208v7.500z" fill="#65737f" />
      <path d="M472.500 209.500L483.500 215.500V435L478.500 432.500V218.500L472.500 215z" fill="#4c4c50" />
      <path
        d="M467.500 213L478.500 218.500V432.500M472.500 215V209.500L483.500 215.500V435"
        fill="none"
        stroke="#30343c"
      />
    </svg>
  </main>
);

const App = () => {
  return (
    <div className="flex h-screen flex-col overflow-hidden bg-[#f0f0f0] font-['Roboto','Noto_Sans',sans-serif]">
      <Defs />
      <Header />
      <Ribbon />
      <div className="flex min-h-0 grow">
        <Browser />
        <Viewport />
      </div>
    </div>
  );
};

export default App;
